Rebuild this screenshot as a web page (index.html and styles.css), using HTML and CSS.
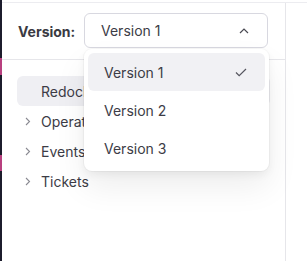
FILE: index.html
```html
<!DOCTYPE html>
<html lang="en">
<head>
    <meta charset="UTF-8">
    <title>Versions</title>
    <link rel="stylesheet" href="styles.css">
</head>
<body>
    <div class="edge"></div>
    <div class="content">
        <div class="frame">
            <aside class="sidebar">
                <div class="version-bar">
                    <span class="version-label">Version:</span>
                    <div class="select">
                        <span>Version 1</span>
                        <svg class="caret" width="10" height="6" viewBox="0 0 10 6"><path d="M1 5 L5 1 L9 5" fill="none" stroke="#4a4a52" stroke-width="1.2"/></svg>
                        <ul class="dropdown">
                            <li class="option selected">
                                <span>Version 1</span>
                                <svg width="12" height="9" viewBox="0 0 12 9"><path d="M1 4.5 L4.2 7.7 L11 1" fill="none" stroke="#55555e" stroke-width="1.2"/></svg>
                            </li>
                            <li class="option"><span>Version 2</span></li>
                            <li class="option"><span>Version 3</span></li>
                        </ul>
                    </div>
                </div>
                <nav class="nav">
                    <div class="nav-item active">Redocly</div>
                    <div class="nav-item"><svg class="chev" width="6" height="9" viewBox="0 0 6 9"><path d="M1 1 L4.5 4.5 L1 8" fill="none" stroke="#8a8a92" stroke-width="1.1"/></svg>Operations</div>
                    <div class="nav-item"><svg class="chev" width="6" height="9" viewBox="0 0 6 9"><path d="M1 1 L4.5 4.5 L1 8" fill="none" stroke="#8a8a92" stroke-width="1.1"/></svg>Events</div>
                    <div class="nav-item"><svg class="chev" width="6" height="9" viewBox="0 0 6 9"><path d="M1 1 L4.5 4.5 L1 8" fill="none" stroke="#8a8a92" stroke-width="1.1"/></svg>Tickets</div>
                </nav>
            </aside>
        </div>
    </div>
</body>
</html>
```

FILE: styles.css
```css
html, body {
    height: 100%;
}
body {
    margin: 0;
    display: flex;
    background-color: white;
    color: #3c3c46;
    font-family: Inter, "Noto Sans", sans-serif;
    font-size: 14px;
    overflow: hidden;
}
.edge {
    width: 2px;
    flex-shrink: 0;
    background: linear-gradient(to bottom,
        #1c1c2c 0, #1c1c2c 58px,
        #b8407f 58px, #b8407f 75px,
        #1c1c2c 75px, #1c1c2c 155px,
        #b8407f 155px, #b8407f 171px,
        #1c1c2c 171px);
}
.content {
    flex: 1;
    padding-top: 2px;
    display: flex;
    flex-direction: column;
}
.frame {
    flex: 1;
    display: flex;
    border-top: 1px solid #ececf0;
}
.sidebar {
    width: 283px;
    border-right: 1px solid #e6e6ea;
}
.version-bar {
    height: 56px;
    display: flex;
    align-items: center;
    padding-left: 16px;
    border-bottom: 1px solid #e6e6ea;
}
.version-label {
    font-weight: 700;
    color: #3a3a42;
    width: 66px;
}
.select {
    position: relative;
    width: 184px;
    height: 35px;
    box-sizing: border-box;
    border: 1px solid #d8d8e0;
    border-radius: 6px;
    padding: 0 18px 0 16px;
    display: flex;
    align-items: center;
    justify-content: space-between;
    margin-top: -1px;
}
.dropdown {
    position: absolute;
    top: 35px;
    left: -1px;
    width: 185px;
    box-sizing: border-box;
    margin: 0;
    padding: 4px;
    list-style: none;
    background: white;
    border-radius: 8px;
    box-shadow: 0 0 0 1px rgba(0, 0, 0, 0.03), 0 4px 8px rgba(0, 0, 0, 0.05), 0 16px 32px rgba(0, 0, 0, 0.07);
    z-index: 10;
}
.option {
    height: 38px;
    display: flex;
    align-items: center;
    justify-content: space-between;
    padding: 0 18px 0 16px;
    border-radius: 6px;
}
.option.selected {
    background-color: #f1f1f4;
}
.nav {
    padding: 16px 15px;
}
.nav-item {
    height: 30px;
    display: flex;
    align-items: center;
    padding-left: 8px;
    border-radius: 6px;
}
.nav-item.active {
    background-color: #efeff3;
    padding-left: 24px;
}
.chev {
    margin-right: 10px;
}
```
